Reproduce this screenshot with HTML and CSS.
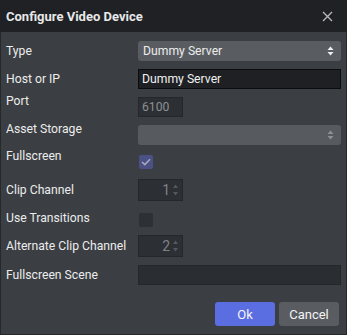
FILE: index.html
```html
<!DOCTYPE html>
<html lang="en">
<head>
    <meta charset="UTF-8">
    <title>Configure Video Device</title>
    <link rel="stylesheet" href="styles.css">
</head>
<body>
    <div class="dialog">
        <div class="titlebar">
            <span class="title">Configure Video Device</span>
            <svg class="close" width="11" height="11" viewBox="0 0 11 11">
                <path d="M1 1 L10 10 M10 1 L1 10" stroke="#b5b7ba" stroke-width="1.4" fill="none"/>
            </svg>
        </div>
        <div class="content">
            <div class="form">
                <label class="row-type">Type</label>
                <div class="select row-type">
                    <span>Dummy Server</span>
                    <svg class="arrows" width="7" height="10" viewBox="0 0 7 10"><path d="M3.5 0.5 L6.5 4 L0.5 4 Z M0.5 6 L6.5 6 L3.5 9.5 Z" fill="#f0f0f0"/></svg>
                </div>

                <label>Host or IP</label>
                <input class="text" type="text" value="Dummy Server">

                <label class="lift">Port</label>
                <div class="field small disabled">6100</div>

                <label class="lift">Asset Storage</label>
                <div class="select muted">
                    <span></span>
                    <svg class="arrows" width="7" height="10" viewBox="0 0 7 10"><path d="M3.5 0.5 L6.5 4 L0.5 4 Z M0.5 6 L6.5 6 L3.5 9.5 Z" fill="#8d9094"/></svg>
                </div>

                <label class="lift">Fullscreen</label>
                <div class="check on">
                    <svg width="10" height="8" viewBox="0 0 10 8"><path d="M1 4 L3.8 6.6 L9 1.2" stroke="#a7a9b8" stroke-width="1.6" fill="none"/></svg>
                </div>

                <label>Clip Channel</label>
                <div class="spin">
                    <span>1</span>
                    <svg width="7" height="14" viewBox="0 0 7 14"><path d="M3.5 1.5 L6 5 L1 5 Z M1 9 L6 9 L3.5 12.5 Z" fill="#55585d"/></svg>
                </div>

                <label>Use Transitions</label>
                <div class="check low"></div>

                <label>Alternate Clip Channel</label>
                <div class="spin">
                    <span>2</span>
                    <svg width="7" height="14" viewBox="0 0 7 14"><path d="M3.5 1.5 L6 5 L1 5 Z M1 9 L6 9 L3.5 12.5 Z" fill="#55585d"/></svg>
                </div>

                <label>Fullscreen Scene</label>
                <div class="field scene"></div>
            </div>

            <div class="buttons">
                <button class="ok">Ok</button>
                <button class="cancel">Cancel</button>
            </div>
        </div>
    </div>
</body>
</html>
```

FILE: styles.css
```css
* {
    box-sizing: border-box;
}

body {
    margin: 0;
    width: 347px;
    height: 335px;
    font-family: Roboto, "Open Sans", sans-serif;
    font-size: 12.2px;
    color: #ececec;
    background: #1f2124;
}

.dialog {
    display: flex;
    flex-direction: column;
    height: 335px;
}

.titlebar {
    height: 32px;
    display: flex;
    align-items: center;
    justify-content: space-between;
    padding: 0 14px 0 6px;
    background: #1f2124;
}

.title {
    font-weight: bold;
    font-size: 13px;
    color: #e8e8e8;
}

.content {
    flex: 1;
    background: #3b3e43;
    border: 1px solid #26282c;
    border-top: none;
    padding: 9px 5px 0 5px;
    display: flex;
    flex-direction: column;
}

.form {
    display: grid;
    grid-template-columns: 132px 203px;
    grid-template-rows: 20px 20px 20px 20px 18px 22px 18px 22px 20px;
    row-gap: 8px;
    align-items: center;
}

.form label {
    white-space: nowrap;
    line-height: 16px;
}

.form label.lift {
    margin-top: -12px;
}

.select {
    height: 20px;
    border-radius: 3px;
    background: #595d62;
    display: flex;
    align-items: center;
    justify-content: space-between;
    padding: 0 7px 0 5px;
}

.select.muted {
    background: #575b60;
}

input.text {
    height: 20px;
    width: 203px;
    margin: 0;
    font: inherit;
    color: #f0f0f0;
    background: #1e2024;
    border: 1px solid #0b0c0e;
    padding: 0 3px;
    outline: none;
}

.field {
    height: 20px;
    background: #2c2f33;
    border: 1px solid #25272b;
    padding: 0 3px;
    display: flex;
    align-items: center;
}

.field.small {
    width: 45px;
}

.field.disabled {
    color: #8e9093;
}

.field.scene {
    height: 20px;
    background: #2a2d31;
}

.check {
    width: 14px;
    height: 14px;
    margin-left: 1px;
    border-radius: 2px;
    background: #2d3034;
    display: flex;
    align-items: center;
    justify-content: center;
}

.check.on {
    background: #4b5085;
}

.check.low {
    margin-top: 4px;
}

.spin {
    width: 45px;
    height: 22px;
    background: #2c2f33;
    border: 1px solid #25272b;
    display: flex;
    align-items: center;
    justify-content: flex-end;
    gap: 2px;
    padding-right: 3px;
    color: #7f8286;
    font-size: 14px;
}

.buttons {
    margin-top: auto;
    margin-bottom: 8px;
    display: flex;
    justify-content: flex-end;
    gap: 4px;
    padding-right: 2px;
}

.buttons button {
    width: 60px;
    height: 24px;
    border: none;
    border-radius: 3px;
    font: inherit;
    font-size: 13px;
    color: #f4f4f4;
    cursor: pointer;
}

.ok {
    background: #5a6de1;
}

.cancel {
    background: #595d62;
}
```
